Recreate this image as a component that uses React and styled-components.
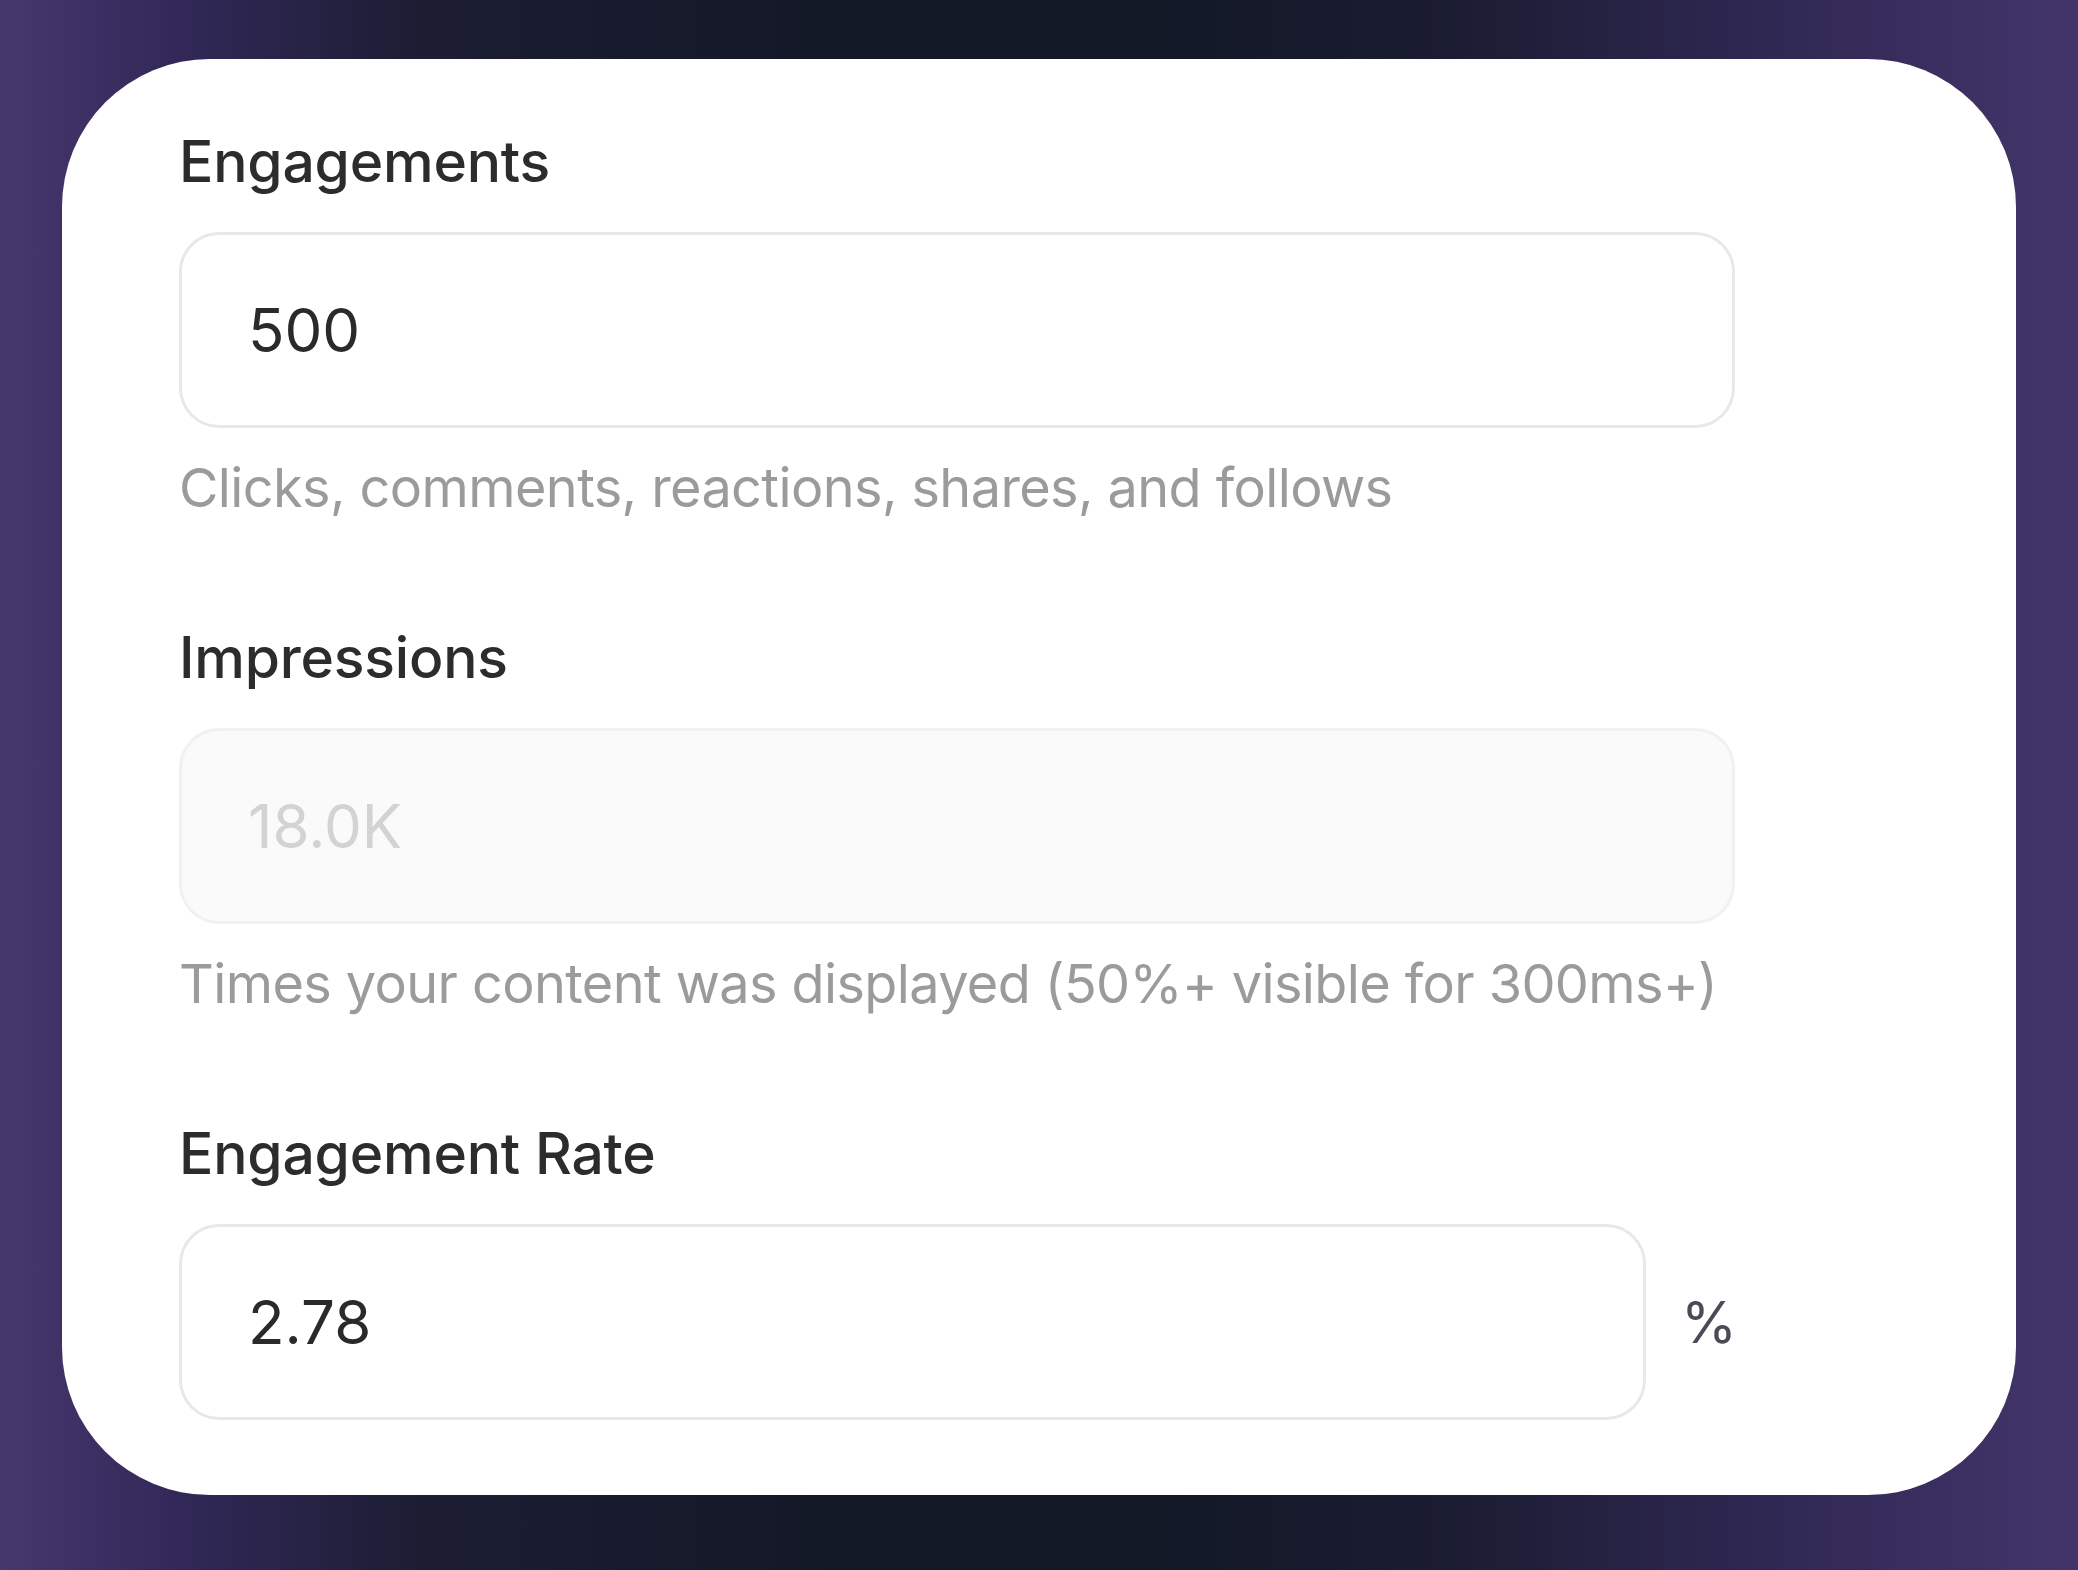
import React from "react";
import styled, { createGlobalStyle } from "styled-components";

const GlobalStyle = createGlobalStyle`
  html, body {
    margin: 0;
    padding: 0;
  }
  body {
    font-family: Inter, "Noto Sans", "Liberation Sans", sans-serif;
    background: #151a2b;
  }
  * { box-sizing: border-box; }
`;

const Page = styled.div`
  min-height: 100vh;
  padding: 59px 62px 75px;
  background: linear-gradient(
    90deg,
    #47376e 0%,
    #33295a 8%,
    #1c1d33 20%,
    #131827 40%,
    #121826 55%,
    #1b1c32 70%,
    #2e2751 84%,
    #43356b 100%
  );
`;

const Card = styled.div`
  width: 1954px;
  height: 1436px;
  background: #ffffff;
  border-radius: 148px;
  padding: 68px 117px 76px;
`;

const Form = styled.div`
  width: 1556px;
  display: flex;
  flex-direction: column;
`;

const Field = styled.div`
  display: flex;
  flex-direction: column;
  margin-bottom: ${(p) => (p.$last ? "0" : "103px")};
`;

const Label = styled.label`
  font-size: 57px;
  font-weight: 500;
  line-height: 69px;
  color: #2c2c2e;
  margin-bottom: 36px;
  letter-spacing: -0.2px;
`;

const Row = styled.div`
  display: flex;
  align-items: center;
  gap: 35px;
`;

const Input = styled.input`
  flex: 1;
  min-width: 0;
  height: 196px;
  border: 3px solid ${(p) => (p.$disabled ? "#f1f1f1" : "#e8e8e8")};
  border-radius: 40px;
  background: ${(p) => (p.$disabled ? "#fafafa" : "#ffffff")};
  padding: 0 0 0 66px;
  font-family: Inter, "Noto Sans", "Liberation Sans", sans-serif;
  font-size: 60px;
  font-weight: 400;
  color: ${(p) => (p.$disabled ? "#d3d3d3" : "#2a2a2c")};
  outline: none;
  &:disabled {
    color: #d3d3d3;
    -webkit-text-fill-color: #d3d3d3;
    opacity: 1;
  }
`;

const Unit = styled.span`
  font-size: 57px;
  font-weight: 400;
  color: #4b4b57;
  width: 54px;
  text-align: left;
`;

const Help = styled.p`
  margin: 27px 0 0;
  font-size: 54px;
  line-height: 65px;
  letter-spacing: -0.6px;
  color: #9b9b9b;
  font-weight: 400;
`;

export default function App() {
  return (
    <>
      <GlobalStyle />
      <Page>
        <Card>
          <Form>
            <Field>
              <Label htmlFor="eng">Engagements</Label>
              <Row>
                <Input id="eng" defaultValue="500" />
              </Row>
              <Help>Clicks, comments, reactions, shares, and follows</Help>
            </Field>
            <Field>
              <Label htmlFor="imp">Impressions</Label>
              <Row>
                <Input id="imp" $disabled disabled value="18.0K" readOnly />
              </Row>
              <Help>Times your content was displayed (50%+ visible for 300ms+)</Help>
            </Field>
            <Field $last>
              <Label htmlFor="rate">Engagement Rate</Label>
              <Row>
                <Input id="rate" defaultValue="2.78" />
                <Unit>%</Unit>
              </Row>
            </Field>
          </Form>
        </Card>
      </Page>
    </>
  );
}
